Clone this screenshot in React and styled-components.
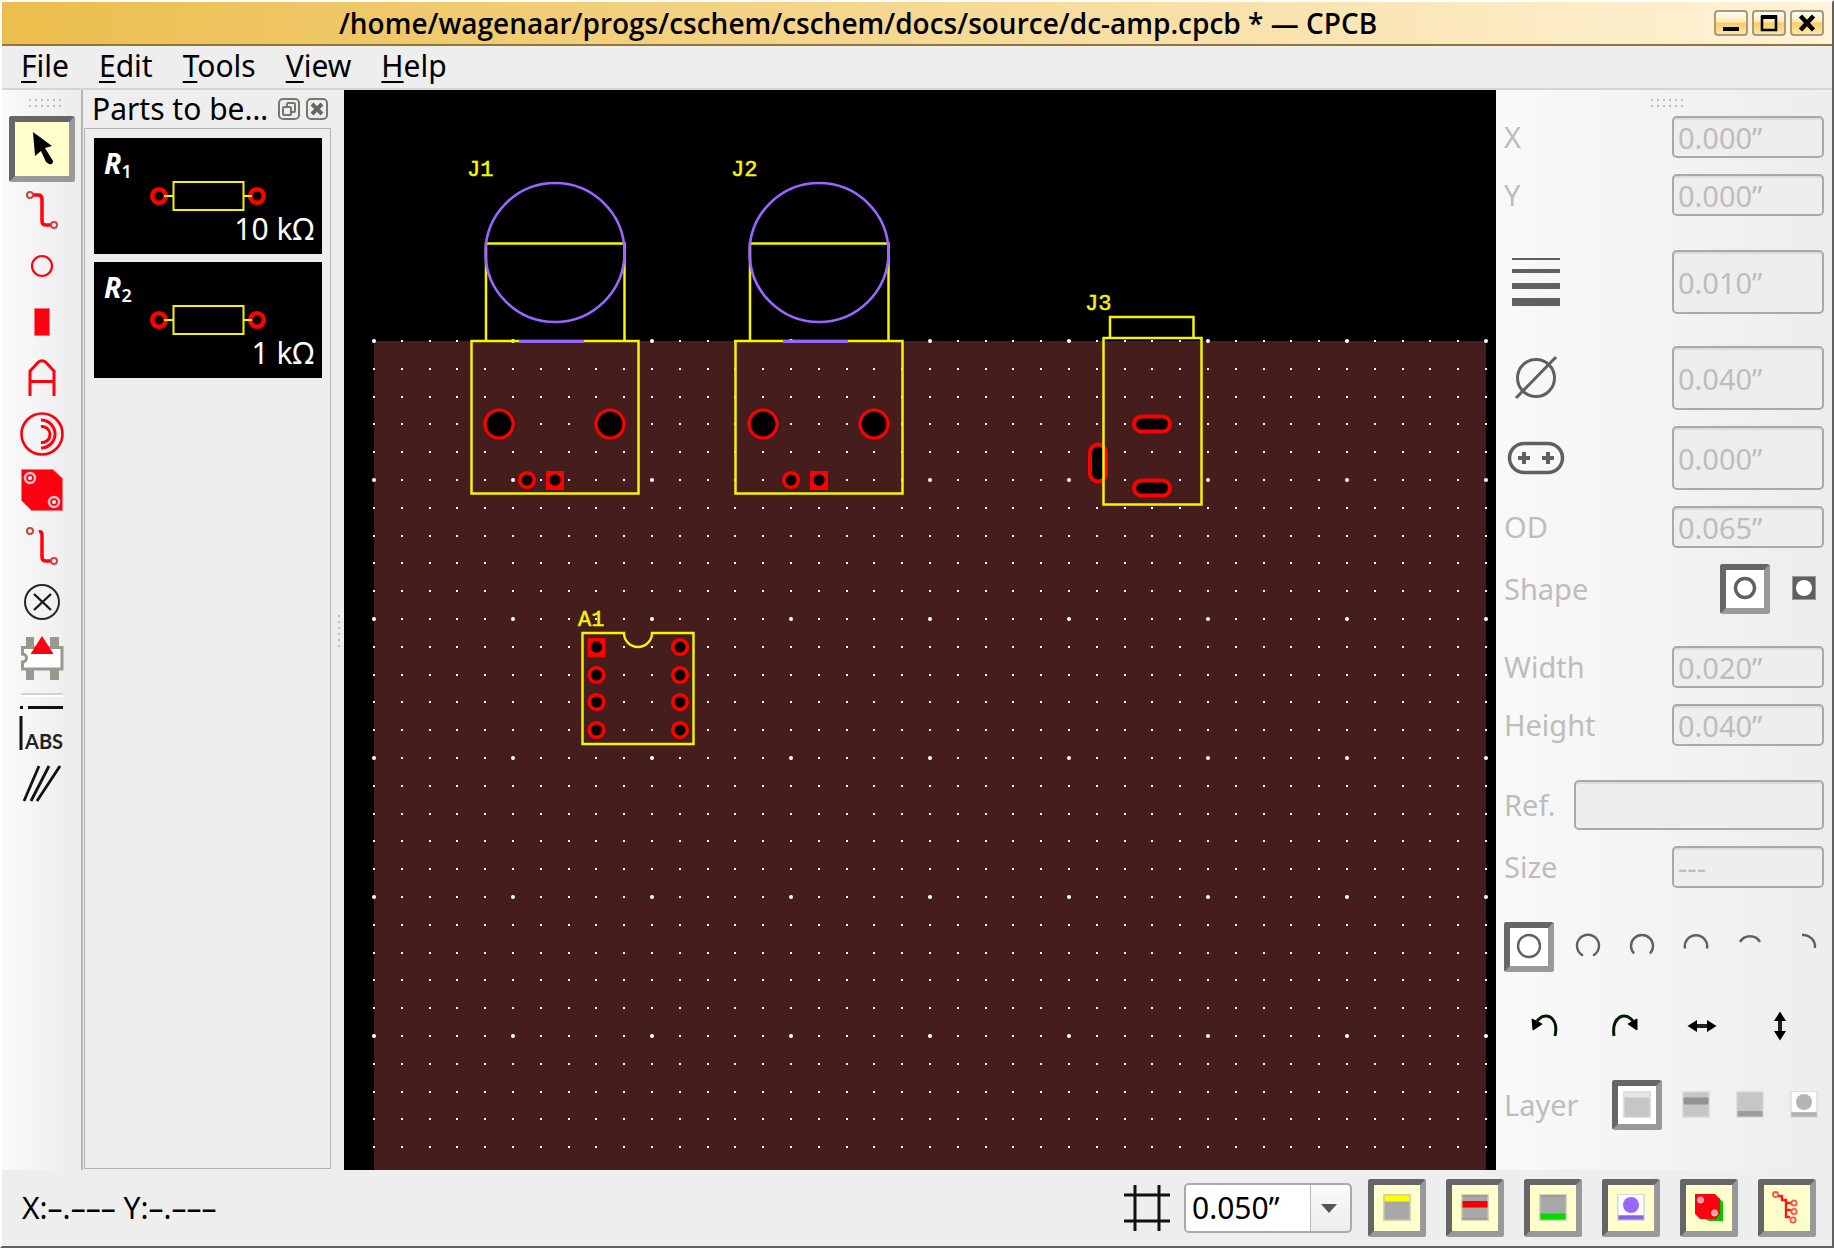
import React from "react";
import styled, { createGlobalStyle } from "styled-components";

const GlobalStyle = createGlobalStyle`
  * { box-sizing: border-box; }
  html, body, #root { height: 100%; margin: 0; }
  body, button, input, select {
    font-family: "Noto Sans", "Open Sans", sans-serif;
    font-size: 29px;
    line-height: 36px;
    color: #000;
  }
  button { padding: 0; border: 0; background: none; }
  svg { display: block; }
`;

const Window = styled.div`
  display: flex;
  flex-direction: column;
  height: 100vh;
  border: 2px solid #616161;
  border-top-color: #fff;
  border-left-color: #fff;
  background: #eeeeee;
  overflow: hidden;
`;

/* Title bar */
const TitleBar = styled.header`
  display: flex;
  align-items: center;
  flex: none;
  height: 44px;
  padding-right: 8px;
  border-bottom: 2px solid #927639;
  background: linear-gradient(90deg, #ebbd4c, #fff3d9);
`;
const Title = styled.h1`
  flex: 1;
  margin: 0;
  font-size: 28px;
  font-weight: 600;
  line-height: 36px;
  text-align: center;
  white-space: nowrap;
  font-family: "Open Sans", "Noto Sans", sans-serif;
`;
const WindowButtons = styled.div`
  display: flex;
  gap: 4px;
`;
const WindowButton = styled.button`
  display: grid;
  place-items: center;
  width: 34px;
  height: 26px;
  border: 2px solid #a79b7c;
  border-radius: 4px;
  background: linear-gradient(#fffdf6, #fce9b4 45%, #f8cc62 50%, #fde7a8);
`;

/* Menu bar */
const MenuBar = styled.nav`
  display: flex;
  align-items: flex-start;
  flex: none;
  height: 44px;
  padding-left: 4px;
  border-bottom: 2px solid #d4d4d4;
`;
const MenuButton = styled.button`
  padding: 0 15px;
  font-size: 30px;
  line-height: 40px;
  &::first-letter {
    text-decoration: underline;
    text-decoration-thickness: 2px;
    text-underline-offset: 4px;
  }
`;

/* Work area */
const Body = styled.main`
  display: flex;
  flex: 1;
  min-height: 0;
`;
const ToolBar = styled.div`
  display: flex;
  flex-direction: column;
  flex: none;
  align-items: center;
  width: 81px;
  padding-left: 1px;
  border-right: 2px solid #b6b6b6;
  background: linear-gradient(90deg, #fafafa, #ececec);
`;
const GripArea = styled.div`
  display: grid;
  place-items: center;
  width: 100%;
  height: 26px;
  padding: 2px 0 0 6px;
`;
const ToolButton = styled.button`
  display: grid;
  flex: none;
  place-items: center;
  width: 66px;
  height: ${(p) => (p.$on ? 66 : 56)}px;
  border: ${(p) => (p.$on ? "6px solid #999" : "0")};
  border-top-color: #666;
  border-left-color: #666;
  border-radius: 3px;
  background: ${(p) => (p.$on ? "#ffffcc" : "none")};
`;
const Separator = styled.hr`
  width: 42px;
  height: 4px;
  margin: 7px 0 3px;
  border: 0;
  border-top: 2px solid #d2d2d2;
  background: #fff;
`;

/* Parts dock */
const Dock = styled.section`
  display: flex;
  flex-direction: column;
  flex: none;
  width: 248px;
  padding: 0 0 1px 1px;
`;
const DockHeader = styled.div`
  display: flex;
  align-items: center;
  height: 38px;
  padding: 0 3px 0 8px;
`;
const DockTitle = styled.h2`
  flex: 1;
  margin: 0;
  font-size: 30px;
  font-weight: 400;
  line-height: 36px;
  white-space: nowrap;
`;
const DockButtons = styled.div`
  display: flex;
  gap: 6px;
`;
const PartList = styled.ul`
  display: flex;
  flex: 1;
  flex-direction: column;
  gap: 8px;
  margin: 0;
  padding: 9px 8px 9px 9px;
  border: 1px solid #b4b4b4;
  list-style: none;
`;
const PartCard = styled.li`
  display: grid;
  grid-template-columns: 1fr;
  height: 116px;
  background: #000;
  color: #fff;
  & > * { grid-area: 1 / 1; }
`;
const PartName = styled.span`
  align-self: start;
  padding: 7px 0 0 10px;
  font-size: 28px;
  font-style: italic;
  font-weight: 700;
  sub {
    font-size: 18px;
    font-style: normal;
    font-weight: 600;
    line-height: 1;
    vertical-align: -4px;
  }
`;
const PartValue = styled.span`
  align-self: end;
  justify-self: end;
  padding: 0 8px 7px 0;
  font-size: 30px;
`;
const Splitter = styled.div`
  display: grid;
  flex: none;
  place-items: center;
  width: 13px;
  padding: 4px 0 0 4px;
`;
const Canvas = styled.div`
  flex: 1;
  min-width: 0;
  background: #000;
  svg { width: 100%; height: 100%; }
`;

/* Property panel */
const Panel = styled.aside`
  display: flex;
  flex-direction: column;
  flex: none;
  width: 336px;
  padding: 0 8px;
  color: #bdbdbd;
  background: linear-gradient(90deg, #f9f9f9, #ededed);
`;
const Group = styled.div`
  display: flex;
  flex-direction: column;
  gap: ${(p) => p.$gap || 16}px;
  margin-bottom: ${(p) => p.$after || 34}px;
`;
const Row = styled.div`
  display: flex;
  align-items: center;
  justify-content: space-between;
`;
const Label = styled.label`
  flex: none;
  white-space: nowrap;
`;
const Field = styled.input`
  width: ${(p) => (p.$wide ? 250 : 152)}px;
  height: ${(p) => p.$h || 42}px;
  padding: 0 4px;
  border: 2px solid #a9a9a9;
  border-radius: 5px;
  background: #eeeeee;
  box-shadow: inset 0 2px 0 #dcdcdc;
  color: #bdbdbd;
`;
const Options = styled.div`
  display: flex;
  align-items: center;
`;
const Option = styled.button`
  display: grid;
  place-items: center;
  width: ${(p) => (p.$on ? 50 : 54)}px;
  height: 50px;
  padding-bottom: 2px;
  border: ${(p) => (p.$on ? "6px solid #999" : "0")};
  border-top-color: #666;
  border-left-color: #666;
  border-radius: 3px;
  background: ${(p) => (p.$on ? "#fff" : "none")};
  margin-right: ${(p) => (p.$on ? 7 : 0)}px;
  &:last-child { margin-right: -7px; }
`;
const Transforms = styled.div`
  display: grid;
  grid-template-columns: repeat(4, 1fr);
  grid-template-rows: 44px;
  padding: 0 5px 0 3px;
  margin-bottom: 32px;
`;
const TransformButton = styled.button`
  display: grid;
  place-items: center;
  align-content: center;
`;

/* Status bar */
const StatusBar = styled.footer`
  display: flex;
  flex: none;
  align-items: center;
  height: 76px;
  padding: 0 16px 0 20px;
`;
const Position = styled.output`
  flex: 1;
  font-size: 30px;
`;
const GridPicker = styled.label`
  display: flex;
  align-items: center;
  gap: 14px;
  margin-right: 16px;
`;
const SelectBox = styled.span`
  display: grid;
  grid-template-columns: 1fr 42px;
  width: 168px;
  height: 50px;
  border: 2px solid #a9a9a9;
  border-radius: 5px;
  background: linear-gradient(#fbfbfb, #ececec);
  overflow: hidden;
  & > select { grid-area: 1 / 1 / 2 / 3; }
  & > svg { grid-area: 1 / 2; place-self: center; pointer-events: none; }
`;
const Select = styled.select`
  appearance: none;
  padding: 0 6px;
  border: 0;
  font-size: 30px;
  background: linear-gradient(90deg, #fff 124px, #b8b8b8 124px, #b8b8b8 125px, transparent 125px);
`;
const LayerButtons = styled.div`
  display: flex;
  gap: 20px;
`;
const LayerButton = styled.button`
  display: grid;
  place-items: center;
  width: 58px;
  height: 58px;
  padding-bottom: 2px;
  border: 6px solid #999;
  border-top-color: #666;
  border-left-color: #666;
  border-radius: 3px;
  background: #ffffcc;
`;

const Grip = ({ cols = 6, rows = 2 }) => (
  <svg width={cols * 6 - 3} height={rows * 6 - 2} fill="#bcbcbc" aria-hidden="true">
    {Array.from({ length: cols * rows }, (_, i) => (
      <rect key={i} x={(i % cols) * 6} y={Math.floor(i / cols) * 6} width="2" height="2" />
    ))}
  </svg>
);

const Icon = ({ size = 48, children, ...rest }) => (
  <svg width={size} height={size} viewBox={`0 0 ${size} ${size}`} fill="none" aria-hidden="true" {...rest}>
    {children}
  </svg>
);

const RED = "#ff0010";

const tools = [
  ["Select", <Icon><path d="M15 7L34 21L27 23L35 36Q35 40 31 39L28 37L23 26L17 31Z" fill="#000" /></Icon>],
  ["Trace", <Icon><path d="M15 9H20Q24 9 24 13V35Q24 39 28 39H33" stroke={RED} strokeWidth="3.500" /><g stroke="#c94444" strokeWidth="2"><circle cx="12" cy="9" r="3" /><circle cx="36" cy="39" r="3" /></g></Icon>],
  ["Hole", <Icon><circle cx="24" cy="24" r="10" stroke={RED} strokeWidth="2.200" /></Icon>],
  ["Pad", <Icon><rect x="16.500" y="10.500" width="15" height="27" fill={RED} stroke="#ff7078" /></Icon>],
  ["Text", <Icon><path d="M12 42V17L20 8.500Q24 5 28 8.500L36 17V42M12 27.500H36" stroke={RED} strokeWidth="3" /></Icon>],
  ["Arc", <Icon><g stroke={RED} strokeWidth="2.600"><circle cx="24" cy="24" r="20.500" /><path d="M23 10A14 14 0 0 1 23 38M23 16.500A8 8 0 0 1 32 24" strokeWidth="3" /><path d="M32 24A8 8 0 0 1 23 32.500" strokeWidth="3" /></g></Icon>],
  ["Plane", <Icon><path d="M3.500 3.500H35L44.500 12.500V44.500H13.500L3.500 34.500Z" fill={RED} stroke="#ff7078" /><g stroke="#ffc4c8" strokeWidth="2.500"><circle cx="12" cy="12" r="5" /><circle cx="36" cy="36" r="5" /></g><g fill="#fff"><circle cx="12" cy="12" r="2" /><circle cx="36" cy="36" r="2" /></g></Icon>],
  ["Pick up trace", <Icon><path d="M21 10Q24 9 24 13V35Q24 39 28 39H33" stroke={RED} strokeWidth="3.500" /><g stroke="#c94444" strokeWidth="2"><circle cx="12" cy="9" r="3" /><circle cx="36" cy="39" r="3" /></g></Icon>],
  ["No connection", <Icon><circle cx="24" cy="24" r="17" stroke="#282434" strokeWidth="2" /><path d="M16 16L33 32M33 16L16 32" stroke="#181818" strokeWidth="2.400" /></Icon>],
  ["Place component", <Icon><path d="M8 3H16V12H8ZM32 3H41V12H32ZM8 36H16V46H8ZM32 36H41V46H32Z" fill="#9b978f" /><path d="M4.500 13.500H44V35H4.500V28A4 4 0 0 0 4.500 20Z" fill="#fff" stroke="#9b978f" strokeWidth="3" /><path d="M24 2L35.500 20H12.500Z" fill={RED} /></Icon>],
];

const extraTools = [
  ["Absolute coordinates", (
    <Icon>
      <path d="M2 3.500H5M10 3.500H45M3 12V46" stroke="#111" strokeWidth="3" />
      <text x="7" y="45" fill="#222" fontFamily="Lato, sans-serif" fontWeight="700" fontSize="20">ABS</text>
    </Icon>
  )],
  ["Angle constraint", <Icon><path d="M6 41L21 6M13 41L31 6M19 41L42 6" stroke="#111" strokeWidth="2.800" /></Icon>],
];

const Part = ({ n, value }) => (
  <PartCard>
    <svg width="228" height="116" fill="none" aria-hidden="true">
      <rect x="79.500" y="44" width="70" height="28" stroke="#f5f500" strokeWidth="2" />
      <g stroke="#ff0000" strokeWidth="4.500"><circle cx="65" cy="58" r="6.800" /><circle cx="163" cy="58" r="6.800" /></g>
      <path d="M70 58H79M150 58H158" stroke="#f5f500" strokeWidth="2" />
    </svg>
    <PartName>R<sub>{n}</sub></PartName>
    <PartValue>{value}</PartValue>
  </PartCard>
);

/* Board geometry */
const STEP = 27.8;
const BOARD = { x: 30, y: 251, cols: 40, rows: 31 };
const YELLOW = "#f5f500";
const PURPLE = "#9966ff";

const GridDots = () => {
  const dots = [];
  for (let r = 0; r < BOARD.rows; r++) {
    for (let c = 0; c <= BOARD.cols; c++) {
      const x = Math.round(BOARD.x + c * STEP);
      const y = Math.round(BOARD.y + r * STEP);
      const major = r % 5 === 0 && c % 5 === 0;
      dots.push(
        major
          ? <circle key={`${r}-${c}`} cx={x} cy={y} r="2" />
          : <rect key={`${r}-${c}`} x={x - 1} y={y - 1} width="2" height="2" />
      );
    }
  }
  return <g fill="#fff">{dots}</g>;
};

const Pad = ({ x, y, r = 7.3, w = 3.6, square }) => (
  square
    ? <g><rect x={x - 9} y={y - 9} width="18" height="19" fill="#f00" /><circle cx={x} cy={y} r="5.700" fill="#000" /></g>
    : <circle cx={x} cy={y} r={r} fill="#000" stroke="#f00" strokeWidth={w} />
);
const Slot = ({ x, y, w, h }) => (
  <rect x={x - w / 2} y={y - h / 2} width={w} height={h} rx={Math.min(w, h) / 2} fill="#000" stroke="#f00" strokeWidth="4" />
);
const Ref = ({ x, y, children }) => (
  <text x={x} y={y} fill={YELLOW} stroke={YELLOW} strokeWidth="0.500" fontFamily="'Liberation Mono', monospace" fontSize="22">{children}</text>
);
const Jack = ({ dx, name }) => (
  <g transform={`translate(${dx} 0)`}>
    <g stroke={YELLOW} strokeWidth="2.500" fill="none">
      <path d="M142 251V153.500H280.500V251" />
      <rect x="127.500" y="251" width="167" height="152.500" />
    </g>
    <circle cx="211" cy="162.500" r="69.500" stroke={PURPLE} strokeWidth="2.600" fill="none" />
    <path d="M175 251.500H240" stroke={PURPLE} strokeWidth="3" />
    <Pad x={155} y={334} r={14} w={3.2} />
    <Pad x={266} y={334} r={14} w={3.2} />
    <Pad x={183} y={390} />
    <Pad x={211} y={390} square />
    <Ref x={123} y={86}>{name}</Ref>
  </g>
);

const Board = () => (
  <svg role="img" aria-label="Board layout">
    <rect x={BOARD.x} y={BOARD.y} width={BOARD.cols * STEP} height="100%" fill="#451d1d" />
    <GridDots />
    <Jack dx={0} name="J1" />
    <Jack dx={264} name="J2" />
    <g>
      <Slot x={754} y={373} w={16} h={37} />
      <Slot x={808} y={334} w={36} h={15} />
      <Slot x={808} y={398} w={36} h={15} />
      <path d="M766 248V227H849.500V248M759.500 248H857.500V414.500H759.500Z" stroke={YELLOW} strokeWidth="2.500" fill="none" />
      <Ref x={741} y={220}>J3</Ref>
    </g>
    <g>
      <path d="M238.500 543H280A14 14 0 0 0 308 543H349.500V654H238.500Z" stroke={YELLOW} strokeWidth="2.400" fill="none" />
      {[557, 585, 612, 640].map((y, i) => (
        <g key={y}>
          <Pad x={252.5} y={y} square={i === 0} />
          <Pad x={336} y={y} />
        </g>
      ))}
      <Ref x={234} y={536}>A1</Ref>
    </g>
  </svg>
);

const GREY = "#606060";
const arcs = [
  ["Three-quarter arc", "M19 33.500A11 11 0 1 1 29 33.500"],
  ["Wide arc", "M16 31.500A11 11 0 1 1 32 31.500"],
  ["Half arc", "M13 26.500A11.200 11.200 0 1 1 35 26.500"],
  ["Third arc", "M14 20A11.500 11.500 0 0 1 34 20"],
  ["Quarter arc", "M22 13A12 12 0 0 1 35 26"],
];

const Slab = ({ base = "#c6c6c6", edge = "#dedede", children }) => (
  <Icon size={36}>
    <rect x="4" y="5" width="28" height="27" fill={edge} />
    <rect x="5.500" y="6.500" width="25" height="24" fill={base} />
    {children}
  </Icon>
);
const MiniHole = ({ fill, bar }) => (
  <>
    <rect x="5.500" y="6" width="25" height="20" fill="#fff" />
    <circle cx="18" cy="16" r="8" fill={fill} />
    <rect x="5.500" y="26.500" width="25" height="4" fill={bar} />
  </>
);

const panelLayers = [
  ["Silk", <Slab><rect x="5.500" y="6.500" width="25" height="5" fill="#e6e6e6" /></Slab>],
  ["Top", <Slab><rect x="5.500" y="11.500" width="25" height="7" fill="#929292" /></Slab>],
  ["Bottom", <Slab><rect x="5.500" y="25" width="25" height="5.500" fill="#9d9d9d" /></Slab>],
  ["Panel", <Slab><MiniHole fill="#b5b5b5" bar="#b0b0b0" /></Slab>],
];

const viewLayers = [
  ["Show silk", <Slab base="#a8a8a8" edge="#d4d4b4"><rect x="5.500" y="6.500" width="25" height="6" fill="#ffff00" /></Slab>],
  ["Show top", <Slab base="#a8a8a8" edge="#d4d4b4"><path d="M5.500 7H30.500M5.500 30H30.500" stroke="#8a8a8a" /><rect x="5.500" y="12" width="25" height="6.500" fill="#f40000" /></Slab>],
  ["Show bottom", <Slab base="#a8a8a8" edge="#d4d4b4"><path d="M5.500 7H30.500" stroke="#8a8a8a" /><rect x="5.500" y="24.500" width="25" height="6" fill="#00dc00" /></Slab>],
  ["Show panel", <Slab edge="#d8d8d8"><MiniHole fill="#9966ff" bar="#8860e0" /></Slab>],
  ["Show planes", (
    <Icon size={36}>
      <path d="M14 9H28L32 13V32H18L12 29Z" fill="#00c800" />
      <path d="M4 5H24L29 10V25L25 30H9L4 25Z" fill="#ff0010" />
      <g fill="#ff9aa0" stroke="#ffd0d0"><circle cx="9.500" cy="11" r="3" /><circle cx="23.500" cy="24" r="3" /></g>
    </Icon>
  )],
  ["Show nets", (
    <Icon size={36}>
      <path d="M9 7H13V11H17V28H21M17 14H22M17 21H22" stroke="#ff1818" strokeWidth="2.400" />
      <g stroke="#ff5050" strokeWidth="1.800"><circle cx="6.500" cy="5.500" r="2.500" /><circle cx="25" cy="14" r="2.600" /><circle cx="25" cy="22.500" r="2.600" /><circle cx="24" cy="31" r="2.600" /></g>
    </Icon>
  )],
];

const TextField = ({ id, label, icon, value = "", h, wide }) => (
  <Row>
    <Label htmlFor={id} aria-label={icon ? label : undefined}>{icon || label}</Label>
    <Field id={id} defaultValue={value} disabled $h={h} $wide={wide} />
  </Row>
);

export default function App() {
  return (
    <>
      <GlobalStyle />
      <Window>
        <TitleBar>
          <Title>/home/wagenaar/progs/cschem/cschem/docs/source/dc-amp.cpcb * — CPCB</Title>
          <WindowButtons>
            <WindowButton aria-label="Minimize"><Icon size={20}><path d="M2 16H18" stroke="#000" strokeWidth="4" /></Icon></WindowButton>
            <WindowButton aria-label="Maximize"><Icon size={20}><path d="M3 4H17V17H3Z" stroke="#000" strokeWidth="2.600" /><path d="M2 4H18" stroke="#000" strokeWidth="4" /></Icon></WindowButton>
            <WindowButton aria-label="Close"><Icon size={20}><path d="M3.500 3L16.500 17M16.500 3L3.500 17" stroke="#000" strokeWidth="4.500" /></Icon></WindowButton>
          </WindowButtons>
        </TitleBar>

        <MenuBar>
          {["File", "Edit", "Tools", "View", "Help"].map((m) => <MenuButton key={m}>{m}</MenuButton>)}
        </MenuBar>

        <Body>
          <ToolBar role="toolbar" aria-label="Tools">
            <GripArea><Grip /></GripArea>
            {tools.map(([name, icon], i) => (
              <ToolButton key={name} aria-label={name} aria-pressed={i === 0} $on={i === 0}>{icon}</ToolButton>
            ))}
            <Separator />
            {extraTools.map(([name, icon]) => <ToolButton key={name} aria-label={name}>{icon}</ToolButton>)}
          </ToolBar>

          <Dock>
            <DockHeader>
              <DockTitle>Parts to be…</DockTitle>
              <DockButtons>
                <button aria-label="Float">
                  <Icon size={22} stroke="#77776f" strokeWidth="2"><rect x="1" y="1" width="20" height="20" rx="4" /><rect x="9" y="5" width="8" height="9" rx="1" /><rect x="5" y="9" width="8" height="8" rx="1" fill="#eee" /></Icon>
                </button>
                <button aria-label="Close dock">
                  <Icon size={22} stroke="#66665f" strokeWidth="2"><rect x="1" y="1" width="20" height="20" rx="4" stroke="#77776f" /><path d="M6 6L16 16M16 6L6 16" strokeWidth="4" /></Icon>
                </button>
              </DockButtons>
            </DockHeader>
            <PartList>
              <Part n="1" value="10 kΩ" />
              <Part n="2" value="1 kΩ" />
            </PartList>
          </Dock>
          <Splitter><Grip cols={1} rows={6} /></Splitter>

          <Canvas><Board /></Canvas>

          <Panel>
            <GripArea><Grip /></GripArea>
            <Group>
              <TextField id="x" label="X" value="0.000”" />
              <TextField id="y" label="Y" value="0.000”" />
            </Group>
            <Group $gap={32} $after={16}>
              <TextField id="line" label="Line width" value="0.010”" h={64} icon={
                <Icon size={64} stroke={GREY}><path d="M8 9H56" strokeWidth="2" /><path d="M8 21H56" strokeWidth="4" /><path d="M8 36H56" strokeWidth="6" /><path d="M8 52H56" strokeWidth="8" /></Icon>
              } />
              <TextField id="dia" label="Hole diameter" value="0.040”" h={64} icon={
                <Icon size={64} stroke={GREY}><circle cx="32" cy="32" r="18.500" strokeWidth="3" /><path d="M12 52L52 11" strokeWidth="3" /></Icon>
              } />
            </Group>
            <Group $after={32}>
              <TextField id="slot" label="Slot length" value="0.000”" h={64} icon={
                <Icon size={64} stroke={GREY}><rect x="5.500" y="17.500" width="53" height="29" rx="14.500" strokeWidth="3.500" /><path d="M14 32H26M20 26V38M38 32H50M44 26V38" strokeWidth="4" /></Icon>
              } />
              <TextField id="od" label="OD" value="0.065”" />
              <Row>
                <span>Shape</span>
                <Options>
                  <Option aria-label="Round" aria-pressed="true" $on><Icon size={36}><circle cx="18" cy="18" r="9.500" stroke={GREY} strokeWidth="3.400" /></Icon></Option>
                  <Option aria-label="Square"><Icon size={36}><rect x="6.500" y="6.500" width="23" height="23" fill={GREY} stroke="#999" /><circle cx="18" cy="18" r="8" fill="#fff" /></Icon></Option>
                </Options>
              </Row>
            </Group>
            <Group>
              <TextField id="w" label="Width" value="0.020”" />
              <TextField id="h" label="Height" value="0.040”" />
            </Group>
            <Group>
              <TextField id="ref" label="Ref." h={50} wide />
              <TextField id="size" label="Size" value="---" />
            </Group>
            <Group $after={32}>
              <Options>
                <Option aria-label="Full circle" aria-pressed="true" $on><Icon size={36}><circle cx="18" cy="18" r="11" stroke={GREY} strokeWidth="2.400" /></Icon></Option>
                {arcs.map(([name, d]) => (
                  <Option key={name} aria-label={name}><Icon><path d={d} stroke={GREY} strokeWidth="2.400" /></Icon></Option>
                ))}
              </Options>
            </Group>
            <Transforms>
              <TransformButton aria-label="Rotate left"><Icon><path d="M15 19Q21 12 28 15Q36 20 33 34" stroke="#001a04" strokeWidth="3" /><path d="M10 17L11 28L20 22Z" fill="#000" stroke="#000" /></Icon></TransformButton>
              <TransformButton aria-label="Rotate right"><Icon><path d="M33 19Q27 12 20 15Q12 20 14 34" stroke="#001a04" strokeWidth="3" /><path d="M37 17L37 28L28 22Z" fill="#000" stroke="#000" /></Icon></TransformButton>
              <TransformButton aria-label="Flip horizontally"><Icon><path d="M16 24H32" stroke="#222" strokeWidth="4" /><path d="M9.500 24L19 18V30ZM38.500 24L29 18V30Z" fill="#000" /></Icon></TransformButton>
              <TransformButton aria-label="Flip vertically"><Icon><path d="M24 16V32" stroke="#222" strokeWidth="4" /><path d="M24 9.500L18 19H30ZM24 38.500L18 29H30Z" fill="#000" /></Icon></TransformButton>
            </Transforms>
            <Row>
              <span>Layer</span>
              <Options>
                {panelLayers.map(([name, icon], i) => (
                  <Option key={name} aria-label={name} aria-pressed={i === 0} $on={i === 0}>{icon}</Option>
                ))}
              </Options>
            </Row>
          </Panel>
        </Body>

        <StatusBar>
          <Position>X:–.––– Y:–.–––</Position>
          <GridPicker>
            <Icon size={46}><path d="M11 0V46M35 0V46M0 10H46M0 36H46" stroke="#111" strokeWidth="3" /></Icon>
            <SelectBox>
              <Select defaultValue="0.050”" aria-label="Grid spacing"><option>0.050”</option></Select>
              <svg width="16" height="9" aria-hidden="true"><path d="M0 0H16L8 9Z" fill="#555" /></svg>
            </SelectBox>
          </GridPicker>
          <LayerButtons>
            {viewLayers.map(([name, icon]) => <LayerButton key={name} aria-label={name} aria-pressed="true">{icon}</LayerButton>)}
          </LayerButtons>
        </StatusBar>
      </Window>
    </>
  );
}
